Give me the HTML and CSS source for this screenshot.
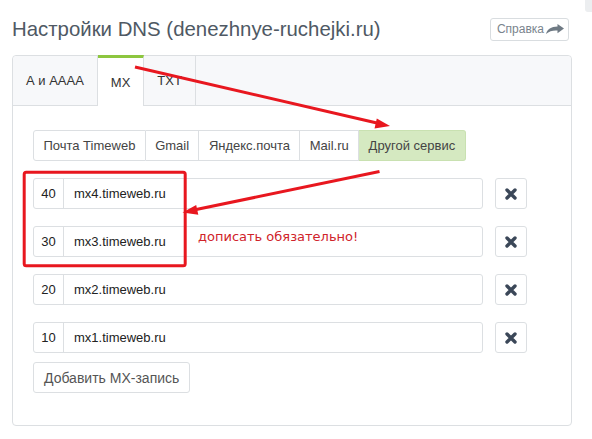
FILE: index.html
```html
<!DOCTYPE html>
<html lang="ru">
<head>
<meta charset="utf-8">
<title>Настройки DNS</title>
<link rel="stylesheet" href="styles.css">
</head>
<body>
<div class="corner"></div>
<div class="page">
  <header class="head">
    <h1 class="title">Настройки DNS (denezhnye-ruchejki.ru)</h1>
    <a class="help" href="#">Справка
      <svg class="help-icon" viewBox="0 0 18 10" width="18" height="10" aria-hidden="true">
        <path d="M11.5 0 L18 4.6 L11.5 9.2 L11.5 6.6 C7 6.3 3.2 7.2 0 10 C1.4 5.2 5 2.8 11.5 2.6 Z"/>
      </svg>
    </a>
  </header>

  <section class="panel">
    <nav class="tabs">
      <span class="tab">А и АААА</span>
      <span class="tab active">MX</span>
      <span class="tab">TXT</span>
    </nav>

    <div class="panel-body">
      <div class="services">
        <span class="svc">Почта Timeweb</span>
        <span class="svc">Gmail</span>
        <span class="svc">Яндекс.почта</span>
        <span class="svc">Mail.ru</span>
        <span class="svc selected">Другой сервис</span>
      </div>

      <div class="records">
        <div class="record">
          <div class="field"><span class="prio">40</span><span class="host">mx4.timeweb.ru</span></div>
          <button class="del" type="button"><svg viewBox="0 0 12 12" width="12" height="12"><path d="M2 2 L10 10 M10 2 L2 10"/></svg></button>
        </div>
        <div class="record">
          <div class="field"><span class="prio">30</span><span class="host">mx3.timeweb.ru</span></div>
          <button class="del" type="button"><svg viewBox="0 0 12 12" width="12" height="12"><path d="M2 2 L10 10 M10 2 L2 10"/></svg></button>
        </div>
        <div class="record">
          <div class="field"><span class="prio">20</span><span class="host">mx2.timeweb.ru</span></div>
          <button class="del" type="button"><svg viewBox="0 0 12 12" width="12" height="12"><path d="M2 2 L10 10 M10 2 L2 10"/></svg></button>
        </div>
        <div class="record">
          <div class="field"><span class="prio">10</span><span class="host">mx1.timeweb.ru</span></div>
          <button class="del" type="button"><svg viewBox="0 0 12 12" width="12" height="12"><path d="M2 2 L10 10 M10 2 L2 10"/></svg></button>
        </div>
      </div>

      <button class="add" type="button">Добавить MX-запись</button>
    </div>
  </section>
</div>

<!-- hand-drawn red markup on top of the form -->
<svg class="marks" width="592" height="439" viewBox="0 0 592 439" aria-hidden="true">
  <rect x="24.2" y="172.2" width="161" height="93.6" rx="2"/>
  <line x1="135" y1="67" x2="378" y2="123.2"/>
  <polygon class="head-fill" points="390,126 374.5,128.5 376.8,118.6"/>
  <line x1="379.5" y1="171.5" x2="195" y2="209.8"/>
  <polygon class="head-fill" points="182.5,212.5 196.2,205 198.3,214.8"/>
</svg>
<p class="note">дописать обязательно!</p>
</body>
</html>
```

FILE: styles.css
```css
html, body {
  margin: 0;
  padding: 0;
  background: #fff;
}

body {
  font-family: "Liberation Sans", Arial, sans-serif;
  color: #333;
  position: relative;
  width: 592px;
  height: 439px;
  overflow: hidden;
}

.corner {
  position: absolute;
  top: 0;
  right: 0;
  width: 7px;
  height: 12px;
  background: #eceef0;
  border-bottom-left-radius: 3px;
}

.page {
  width: 560px;
  margin-left: 12px;
}

/* page heading */
.head {
  display: flex;
  align-items: center;
  justify-content: space-between;
  height: 26px;
  margin-top: 16px;
  padding-right: 3px;
}

.title {
  margin: 0;
  font-size: 20.4px;
  line-height: 26px;
  font-weight: normal;
  color: #4f5964;
}

.help {
  display: flex;
  align-items: center;
  gap: 2px;
  box-sizing: border-box;
  height: 23px;
  padding: 0 4px 0 6px;
  border: 1px solid #d9dde0;
  border-radius: 3px;
  font-size: 12px;
  color: #7a848d;
  text-decoration: none;
}

.help-icon {
  fill: #6f7a84;
  margin-top: -1px;
}

/* tabbed panel */
.panel {
  margin-top: 13px;
  box-sizing: border-box;
  width: 560px;
  border: 1px solid #dcdfe2;
  border-radius: 4px;
}

.tabs {
  display: flex;
  height: 49px;
  background: #f7f8fa;
  border-bottom: 1px solid #dcdfe2;
  border-radius: 4px 4px 0 0;
}

.tab {
  display: flex;
  align-items: center;
  padding: 0 13px;
  border-right: 1px solid #dcdfe2;
  font-size: 13px;
  color: #333;
}

.tab.active {
  background: #fff;
  border-top: 3px solid #8dc63f;
  margin-top: -1px;
  margin-bottom: -1px;
}

.panel-body {
  padding: 24px 20px 32px;
}

/* mail service presets */
.services {
  display: flex;
  width: max-content;
}

.svc {
  display: flex;
  align-items: center;
  height: 31px;
  box-sizing: border-box;
  padding: 0 9.4px;
  border: 1px solid #dcdfe2;
  border-left: none;
  font-size: 13px;
  color: #444;
}

.svc:first-child {
  border-left: 1px solid #dcdfe2;
  border-radius: 3px 0 0 3px;
}

.svc:last-child {
  border-radius: 0 3px 3px 0;
}

.svc.selected {
  background: #d5e9c1;
  border-color: #c9e1b1;
}

/* MX records */
.records {
  display: flex;
  flex-direction: column;
  gap: 17px;
  margin-top: 17px;
}

.record {
  display: flex;
  align-items: center;
  gap: 12px;
}

.field {
  display: flex;
  width: 450px;
  height: 31px;
  box-sizing: border-box;
  border: 1px solid #dcdfe2;
  border-radius: 3px;
  font-size: 13px;
  color: #222;
}

.prio {
  display: flex;
  align-items: center;
  justify-content: center;
  width: 29px;
  border-right: 1px solid #dcdfe2;
}

.host {
  display: flex;
  align-items: center;
  padding-left: 10px;
}

.del {
  display: flex;
  align-items: center;
  justify-content: center;
  width: 32px;
  height: 31px;
  padding: 0;
  background: #fff;
  border: 1px solid #dcdfe2;
  border-radius: 3px;
}

.del svg path {
  stroke: #3b4758;
  stroke-width: 3.4;
  stroke-linecap: round;
  fill: none;
}

.add {
  margin-top: 9px;
  height: 31px;
  padding: 0 10px;
  background: #fff;
  border: 1px solid #dcdfe2;
  border-radius: 3px;
  font-family: "Liberation Sans", Arial, sans-serif;
  font-size: 14px;
  color: #555;
}

/* red markup */
.marks {
  position: absolute;
  top: 0;
  left: 0;
  pointer-events: none;
}

.marks rect,
.marks line {
  fill: none;
  stroke: #e8171f;
  stroke-width: 3;
}

.marks .head-fill {
  fill: #e8171f;
}

.note {
  position: absolute;
  left: 198px;
  top: 229px;
  margin: 0;
  font-family: "DejaVu Sans", Verdana, sans-serif;
  font-size: 13px;
  line-height: 15px;
  color: #d0232a;
}
```
